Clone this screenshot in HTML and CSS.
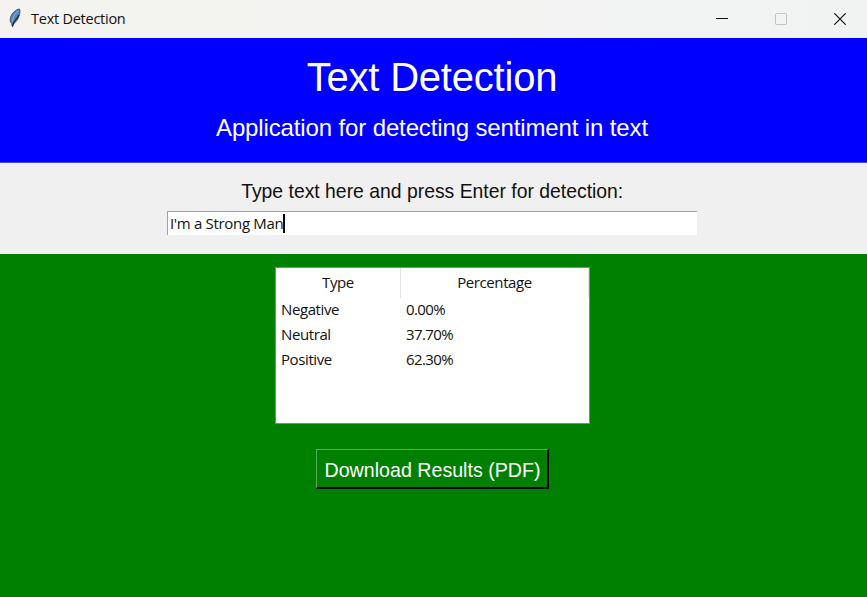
FILE: index.html
```
<!DOCTYPE html>
<html lang="en">
<head>
<meta charset="utf-8">
<title>Text Detection</title>
<link rel="stylesheet" href="styles.css">
</head>
<body>
<div class="window">
  <header class="titlebar">
    <svg class="feather" width="14" height="20" viewBox="0 0 14 20">
      <path d="M11.500 1C7.500 1.500 4 5 2.500 9.500C1.800 12 2.300 14 3.500 15.500L4.500 18.500L5.500 16C8 14 10 11.500 11 8C12 5 12.300 2.500 11.500 1Z" fill="#4c86c4" stroke="#5b5750" stroke-width="1"/>
      <path d="M10 3C7 6 5 9 4.300 14" fill="none" stroke="#86b4e2" stroke-width="1"/>
      <path d="M11 7L8.500 11L6 14L4.300 18.500" fill="none" stroke="#22262b" stroke-width="1.200"/>
    </svg>
    <span class="caption">Text Detection</span>
    <div class="controls">
      <svg width="12" height="12" viewBox="0 0 12 12"><path d="M0 5.500H12" stroke="#111" fill="none"/></svg>
      <svg width="12" height="12" viewBox="0 0 12 12"><rect x=".5" y=".5" width="11" height="11" rx="1" stroke="#c2c2c2" fill="none"/></svg>
      <svg width="12" height="12" viewBox="0 0 12 12"><path d="M.3 .3L11.700 11.700M11.700 .3L.3 11.700" stroke="#111" stroke-width="1.200" fill="none"/></svg>
    </div>
  </header>
  <section class="banner">
    <h1>Text Detection</h1>
    <p>Application for detecting sentiment in text</p>
  </section>
  <section class="entry">
    <label>Type text here and press Enter for detection:</label>
    <div class="field"><span class="value">I'm a Strong Man</span><i class="caret"></i></div>
  </section>
  <main class="results">
    <div class="table">
      <div class="row head"><div>Type</div><div>Percentage</div></div>
      <div class="row"><div>Negative</div><div>0.00%</div></div>
      <div class="row"><div>Neutral</div><div>37.70%</div></div>
      <div class="row"><div>Positive</div><div>62.30%</div></div>
    </div>
    <button class="download"><span>Download Results (PDF)</span></button>
  </main>
</div>
</body>
</html>
```
FILE: styles.css
```
* { box-sizing: border-box; }
body { margin: 0; overflow: hidden; }
.window { width: 867px; height: 597px; display: flex; flex-direction: column; font: 15px "Open Sans", "Noto Sans", sans-serif; color: #111; }
.titlebar { height: 38px; flex: none; display: flex; align-items: center; padding: 0 21px 0 8px; background: linear-gradient(90deg, #f4f3f0, #f1f3f3); }
.feather { margin-top: -2px; }
.caption { margin: -2px 0 0 9px; font-size: 14.5px; letter-spacing: -.25px; white-space: nowrap; }
.controls { margin-left: auto; display: flex; gap: 47px; }
.controls svg { display: block; }
.banner { height: 125px; flex: none; background: #00f; color: #fff; font-family: "Liberation Sans", Arial, sans-serif; text-align: center; padding-top: 15px; border-bottom: 1px solid #4747f5; }
.banner h1 { margin: 0 3px 0 0; font-size: 40px; font-weight: 400; line-height: 48px; letter-spacing: -.2px; }
.banner p { margin: 12px 3px 0 0; font-size: 24px; line-height: 30px; letter-spacing: -.13px; }
.entry { height: 91px; flex: none; background: #f0f0f0; display: flex; flex-direction: column; align-items: center; padding: 14px 3px 0 0; }
.entry label { font: 21px/28px "Liberation Sans", Arial, sans-serif; white-space: nowrap; transform: scaleX(.922); }
.field { margin-top: 6px; width: 530px; height: 24px; background: #fff; border-top: 1px solid #a0a0a0; border-left: 1px solid #a0a0a0; display: flex; align-items: center; padding: 0 0 1px 2px; }
.value { letter-spacing: -.32px; white-space: nowrap; }
.caret { width: 2px; height: 19px; background: #000; }
.results { flex: 1; background: #008000; display: flex; flex-direction: column; align-items: center; padding: 13px 2px 0 0; }
.table { width: 315px; height: 157px; flex: none; background: #fff; border: 1px solid #828790; }
.row { display: grid; grid-template-columns: 125px 188px; height: 25px; line-height: 23px; letter-spacing: -.4px; }
.row div { padding-left: 5px; }
.row:not(.head) div:last-child { letter-spacing: -.6px; }
.head { height: 30px; line-height: 29px; text-align: center; }
.head div { padding: 0; border-right: 1px solid #e5e5e5; }
.download { margin-top: 25px; width: 233px; height: 40px; padding: 2px 0 0 1px; background: #008000; color: #fff; border: solid; border-width: 1px 2px 2px 1px; border-color: #58ac58 #000 #000 #58ac58; font: 21px "Liberation Sans", Arial, sans-serif; white-space: nowrap; }
.download span { display: inline-block; margin: 0 -10px; transform: scaleX(.935); }
```
